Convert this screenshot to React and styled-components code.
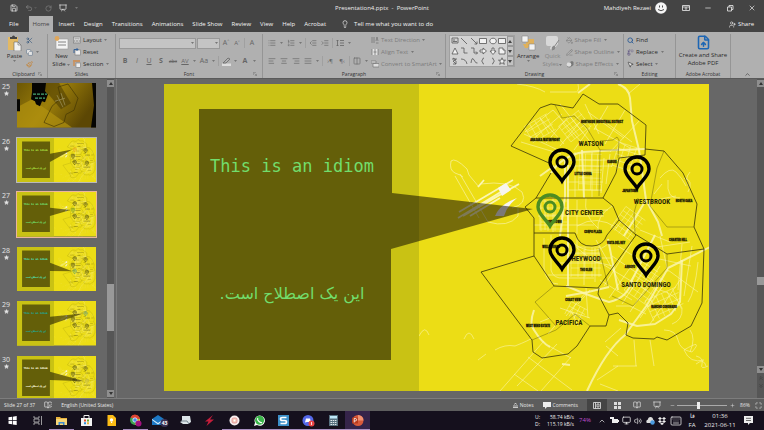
import React from "react";
import styled, { createGlobalStyle, css } from "styled-components";
import {
  Save, Undo2, RotateCw, Presentation, Scissors, Copy, Paintbrush, Lightbulb, Minus, X,
  Search, MousePointer2, UserPlus, FileUp, AlignLeft, AlignCenter, AlignRight, AlignJustify,
  List, ListOrdered, IndentDecrease, IndentIncrease, Columns2, ChevronUp, BookOpen,
  Volume2, Monitor, Keyboard, Star, Replace as ReplaceIcon, PencilLine, PaintBucket,
  Maximize, Plus, BookOpenCheck, ChevronsUp, ChevronsDown,
} from "lucide-react";

const Global = createGlobalStyle`
  *, *::before, *::after { box-sizing: border-box; }
  body { margin: 0; background: #666; }
  button, input, select { font: inherit; color: inherit; margin: 0; padding: 0; border: 0; background: none; }
  button { white-space: nowrap; }
  svg { display: block; flex: none; }
`;

const Shell = styled.div`
  height: 100vh;
  display: flex;
  flex-direction: column;
  overflow: hidden;
  font: 6px/8px "Open Sans", "Noto Sans", sans-serif;
  color: #333;
`;

/* ---------- title bar and tabs ---------- */

const TitleBar = styled.header`
  display: grid;
  grid-template-columns: 1fr auto 1fr;
  align-items: center;
  height: 16px;
  background: #444;
  color: #eee;
`;
const QuickAccess = styled.div`
  display: flex;
  align-items: center;
  gap: 7px;
  padding-left: 10px;
`;
const WindowTools = styled.div`
  display: flex;
  align-items: center;
  justify-content: flex-end;
  gap: 14px;
  padding-right: 8px;
`;
const Account = styled.div`
  display: flex;
  align-items: center;
  gap: 4px;
  margin-right: 1px;
`;
const BarButton = styled.button`
  display: flex;
  align-items: center;
  opacity: ${(p) => (p.$dim ? 0.4 : 1)};
`;

const TabBar = styled.nav`
  display: flex;
  height: 16px;
  padding: 0 10px 0 5px;
  gap: 1px;
  background: #444;
  color: #f4f4f4;
`;
const Tab = styled.button`
  padding: 0 4px;
  ${(p) => p.$file && css`padding-right: 9px;`}
  ${(p) => p.$active && css`background: #b0b0b0; color: #444;`}
`;
const TellMe = styled.button`
  display: flex;
  align-items: center;
  gap: 5px;
  margin-left: 10px;
`;
const Share = styled.button`
  display: flex;
  align-items: center;
  gap: 2px;
  margin-left: auto;
`;

/* ---------- ribbon ---------- */

const Ribbon = styled.section`
  display: grid;
  grid-template-columns: 48px 68px 147px 183px 178px 52px 55px 1fr;
  height: 47px;
  background: #b0b0b0;
  border-bottom: 1px solid #5a5a5a;
`;
const Group = styled.div`
  display: flex;
  flex-direction: column;
  min-width: 0;
  margin: 2px 0;
  border-right: 1px solid #959595;
`;
const GroupBody = styled.div`
  flex: 1;
  display: flex;
  padding: 0 3px;
  gap: ${(p) => p.$gap || 0}px;
`;
const GroupLabel = styled.div`
  display: grid;
  grid-template-columns: 9px 1fr 9px;
  align-items: center;
  height: 8px;
  text-align: center;
  font-size: 5px;
  color: #333;
`;
const BigButton = styled.button`
  display: flex;
  flex-direction: column;
  align-items: center;
  width: ${(p) => p.$w}px;
  padding-top: 1px;
  gap: 1px;
  line-height: 8px;
  color: ${(p) => (p.$dim ? "#858585" : "#2b2b2b")};
`;
const BigLabel = styled.span`
  display: flex;
  flex-direction: column;
  align-items: center;
`;
const Stack = styled.div`
  display: flex;
  flex-direction: column;
`;
const SmallButton = styled.button`
  display: flex;
  align-items: center;
  gap: 2px;
  height: 12px;
  color: ${(p) => (p.$dim ? "#7c7c7c" : "#2b2b2b")};
`;
const ToolRows = styled.div`
  display: flex;
  flex-direction: column;
  gap: 6px;
  padding-top: 3px;
  width: ${(p) => (p.$w ? p.$w + "px" : "auto")};
`;
const ToolRow = styled.div`
  display: flex;
  align-items: center;
  height: 12px;
  gap: ${(p) => p.$gap || 0}px;
`;
const Tool = styled.button`
  display: grid;
  place-items: center;
  width: ${(p) => p.$w || 12}px;
  height: 12px;
  color: #666;
  font-size: ${(p) => p.$size || 7}px;
  font-weight: ${(p) => (p.$bold ? 700 : 400)};
  font-style: ${(p) => (p.$italic ? "italic" : "normal")};
  text-decoration: ${(p) => p.$deco || "none"};
`;
const CaretBox = styled.span`
  display: inline-grid;
  place-items: center;
  width: ${(p) => p.$w}px;
  color: #777;
`;
const Divider = styled.span`
  width: 1px;
  height: 10px;
  margin: 0 1px;
  background: #a0a0a0;
`;
const Combo = styled.select`
  appearance: none;
  width: ${(p) => p.$w}px;
  height: 11px;
  border: 1px solid #999;
  background: #c4c4c4;
`;
const ComboWrap = styled.label`
  display: grid;
  align-items: center;
  & > * { grid-area: 1 / 1; }
  & > span { justify-self: end; pointer-events: none; }
`;
const Gallery = styled.div`
  display: grid;
  grid-template-columns: repeat(6, 1fr) 7px;
  grid-template-rows: repeat(3, 10px);
  width: 66px;
  height: 32px;
  margin-top: 1px;
  border: 1px solid #a0a0a0;
  background: #d2d2d2;
`;
const Shape = styled.button`
  display: grid;
  place-items: center;
  color: #555;
`;
const Scroller = styled.button`
  display: grid;
  place-items: center;
  border: 1px solid #999;
  background: #c2c2c2;
  color: #444;
`;
const Collapse = styled.button`
  align-self: end;
  justify-self: end;
  padding: 0 13px 2px 0;
`;

/* ---------- workspace ---------- */

const Workspace = styled.main`
  flex: 1;
  min-height: 0;
  display: flex;
  background: #676767;
`;
const ThumbPane = styled.aside`
  flex: 0 0 107px;
  display: flex;
  flex-direction: column;
  gap: 10px;
  padding: 4px 0 0 1px;
  overflow: hidden;
`;
const ThumbRow = styled.button`
  display: grid;
  grid-template-columns: 10px 79px;
  gap: 6px;
  flex: none;
  align-items: start;
  color: #e4e4e4;
  text-align: left;
`;
const ThumbNumber = styled.span`
  display: flex;
  flex-direction: column;
  align-items: center;
  font-size: 7px;
  line-height: 8px;
`;
const ThumbFrame = styled.span`
  display: block;
  aspect-ratio: 545 / 307;
  ${(p) => p.$ring && css`box-shadow: 0 0 0 1px ${p.$ring};`}
`;
const ScrollTrack = styled.div`
  flex: 0 0 7px;
  display: grid;
  grid-template-rows: 7px ${(p) => p.$before}fr ${(p) => p.$size}px ${(p) => p.$after}fr auto;
  padding: 1px 0;
  background: #565656;
`;
const ScrollButton = styled.button`
  display: grid;
  place-items: center;
  height: 7px;
  background: ${(p) => (p.$plain ? "none" : "#8e8e8e")};
  color: #333;
`;
const ScrollThumb = styled.div`
  grid-row: 3;
  background: #999;
`;
const ScrollEnd = styled.div`
  grid-row: 5;
  display: grid;
  gap: 1px;
`;
const Stage = styled.section`
  flex: 1;
  min-width: 0;
  margin-left: 2px;
  padding: 5px 48px 0 47px;
  border-left: 1px solid #7b7b7b;
`;
const SlideFrame = styled.div`
  aspect-ratio: 545 / 307;
`;
const SlideSvg = styled.svg`
  width: 100%;
  height: 100%;
`;

/* ---------- status bar ---------- */

const StatusBar = styled.footer`
  display: flex;
  align-items: center;
  height: 13px;
  padding: 0 1px 0 4px;
  border-top: 1px solid #7d7d7d;
  background: #5d5d5d;
  color: #e6e6e6;
  font-size: 5px;
`;
const StatusLeft = styled.div`
  display: flex;
  align-items: center;
  gap: 9px;
  margin-right: auto;
`;
const StatusButton = styled.button`
  display: flex;
  align-items: center;
  justify-content: center;
  gap: 2px;
  height: 12px;
  width: ${(p) => (p.$w ? p.$w + "px" : "auto")};
  margin-right: ${(p) => p.$mr || 0}px;
  background: ${(p) => (p.$active ? "#444" : "none")};
`;
const Zoom = styled.input`
  appearance: none;
  width: 50px;
  height: 8px;
  background: linear-gradient(#aaa, #aaa) center / 100% 1px no-repeat;
  &::-webkit-slider-thumb {
    appearance: none;
    width: 3px;
    height: 7px;
    background: #eee;
  }
`;

/* ---------- taskbar ---------- */

const Taskbar = styled.footer`
  display: flex;
  height: 19px;
  background: #15101d;
  color: #eee;
`;
const TaskList = styled.div`
  display: flex;
  flex: 0 0 370px;
`;
const TaskButton = styled.button`
  flex: 1;
  display: grid;
  place-items: center;
  background: ${(p) => (p.$active ? "#35244a" : "none")};
  box-shadow: ${(p) => (p.$open ? "inset 0 -1px 0 #a98fc0" : "none")};
`;
const Tray = styled.div`
  display: flex;
  align-items: center;
  margin-left: auto;
  padding-right: 8px;
`;
const TrayCell = styled.button`
  display: grid;
  place-items: center;
  width: ${(p) => p.$w || 12}px;
`;
const TrayText = styled.div`
  width: ${(p) => p.$w}px;
  text-align: ${(p) => p.$align || "center"};
  color: ${(p) => p.$color || "#eee"};
  font-size: 6px;
  line-height: 9px;
  white-space: nowrap;
`;
const Net = styled(TrayText)`
  font-size: 5px;
  line-height: 7px;
`;

/* ---------- small drawings ---------- */

const Down = ({ w = 7 }) => (
  <CaretBox $w={w}>
    <svg width="3" height="2" viewBox="0 0 3 2"><path d="M0 0h3L1.500 2z" fill="currentColor" /></svg>
  </CaretBox>
);
const Arrow = ({ up }) => (
  <svg width="4" height="3" viewBox="0 0 4 3"><path d={up ? "M0 3h4L2 0z" : "M0 0h4L2 3z"} fill="currentColor" /></svg>
);
const Launcher = () => (
  <svg width="4" height="4" viewBox="0 0 4 4" fill="none" stroke="#777" strokeWidth=".6"><path d="M.3 3V.3H3M1.500 1.500l2 2m0-1.600v1.700H1.800" /></svg>
);
const PasteIcon = () => (
  <svg width="15" height="16" viewBox="0 0 15 16">
    <rect x="1" y="2" width="10" height="13" fill="#e3b964" />
    <path d="M3 4V2h2a1.500 1.500 0 0 1 3 0h2v2z" fill="#444" />
    <path d="M7 7h4l3 3v6H7z" fill="#f2f2f2" stroke="#666" strokeWidth=".6" />
    <path d="M11 7v3h3" fill="none" stroke="#666" strokeWidth=".6" />
  </svg>
);
const NewSlideIcon = () => (
  <svg width="15" height="16" viewBox="0 0 15 16">
    <rect x="2" y="4" width="12" height="10" fill="#f4f4f4" stroke="#999" strokeWidth=".6" />
    <path d="M4 7h8M4 10h8" stroke="#777" strokeWidth=".9" />
    <circle cx="3" cy="3.500" r="2.400" fill="#e0a75b" />
  </svg>
);
const LayoutIcon = () => (
  <svg width="8" height="8" viewBox="0 0 8 8"><rect x=".5" y="1" width="7" height="6" fill="#ddd" stroke="#777" strokeWidth=".6" /><path d="M1.500 2.500h5M1.500 4h2v2h-2zM4.500 4h2v2h-2z" fill="none" stroke="#888" strokeWidth=".5" /></svg>
);
const ResetIcon = () => (
  <svg width="8" height="8" viewBox="0 0 8 8"><rect x="2" y="2" width="5.500" height="5" fill="#eee" stroke="#777" strokeWidth=".6" /><path d="M1 5V1.500h4M3.500 0L5 1.500 3.500 3" fill="none" stroke="#2c5c96" strokeWidth=".9" /></svg>
);
const SectionIcon = () => (
  <svg width="8" height="8" viewBox="0 0 8 8"><path d="M0 1h7" stroke="#d97f2c" strokeWidth="1.200" /><rect x="3" y="3" width="4.500" height="4.500" fill="#eee" stroke="#777" strokeWidth=".6" /><path d="M1 2v4" stroke="#d97f2c" /></svg>
);
const ArrangeIcon = () => (
  <svg width="15" height="16" viewBox="0 0 15 16">
    <path d="M5 4h8v8H5z" fill="#e0b15c" /><path d="M1 1h6v6H1zM8 9h6v6H8z" fill="#f2f2f2" stroke="#888" strokeWidth=".6" />
    <path d="M2 9h5v4H4z" fill="#e0b15c" />
  </svg>
);
const StylesIcon = () => (
  <svg width="15" height="16" viewBox="0 0 15 16"><path d="M1 3q0-2 2-2h8q2 0 2 2v6l-5 6q-3 0-3-2l1-2H3q-2 0-2-2z" fill="#d8d8d8" /><path d="M14 5l-5 7M9 11q-2 0-2 4 3 0 3-3z" fill="#888" stroke="#888" /></svg>
);
const TextDirIcon = () => (
  <svg width="8" height="8" viewBox="0 0 8 8" fill="none" stroke="#777" strokeWidth=".8"><path d="M1 1v6M3 1v6M5 5l1-4 1 4M5 7h2.500" /></svg>
);
const AlignTextIcon = () => (
  <svg width="8" height="8" viewBox="0 0 8 8"><rect x="1" y="1" width="6" height="6" fill="#e2e2e2" /><path d="M1 1v6M7 1v6M4 1v6M2.500 4h3" stroke="#777" strokeWidth=".8" /></svg>
);
const SmartArtIcon = () => (
  <svg width="8" height="8" viewBox="0 0 8 8"><path d="M0 1h5v2H0zM2 3.500h6V7H2z" fill="#ddd" stroke="#777" strokeWidth=".7" /></svg>
);
const EffectsIcon = () => (
  <svg width="8" height="8" viewBox="0 0 8 8"><path d="M2 3l4-2 1.500 1v3L4 7.500 1 7z" fill="#777" /><circle cx="3" cy="4.500" r="2.300" fill="#ddd" /></svg>
);
const Avatar = () => (
  <svg width="12" height="12" viewBox="0 0 12 12"><circle cx="6" cy="6" r="5.800" fill="#f5f5f5" /><path d="M4.500 3.500v2M7.500 3.500v2M3 7.500q3 2.500 6 0" stroke="#222" fill="none" strokeWidth=".8" /></svg>
);

const line = { fill: "none", stroke: "currentColor", strokeWidth: 0.8 };
const shapePaths = [
  "M1 1h6v5H1zM2 3h2M2 4.500h4", "M1 1l6 6", "M1 1l6 6M7 4.500V7H4.500", "M.5 1.500h7v5h-7z", "M4 1.200a3.300 2.800 0 1 0 .1 0z", "M.5 1.500h7v5h-7z",
  "M4 1l3 6H1z", "M1 1h3v5h3.500", "M1 1h3v5h3.500M6 4.500L7.500 6 6 7.500", "M1 3h3V1l3.500 3L4 7V5H1z", "M3 1h2v3h2L4 7.500 1 4h2z", "M1 1h4v2h2v4H1z",
  "M2 1l3 2-3 1 3 3M5 4v3H2M1 2h5", "M1 2q5 0 6 5", "M1 6q1-7 3-3t3.500 3", "M5 1Q3.500 1 3.500 3L2.500 4l1 1q0 2 1.500 2", "M3 1q1.500 0 1.500 2l1 1-1 1q0 2-1.500 2", "M4 .8l1 2.400h2.500l-2 1.600.8 2.500L4 5.800 1.700 7.300l.8-2.500-2-1.600H3z",
];

/* ---------- city map ---------- */

const districts = [
  "M549 163L511 146 540 108 551 104 573 108 583 94 599 104 618 104 646 125 645 155 619 158 616 173 603 198 536 198 551 173",
  "M536 198L525 207 534 218V256L554 286 598 288 636 235 619 220 613 206 603 198",
  "M534 233h41M575 233q4 14 17 13 11 0 15-11L619 220",
  "M645 149L664 151 683 173 697 204 694 227 699 238 704 249 702 303 691 326 667 340 657 337 654 339 633 338 626 335 628 323 618 313 609 315 598 294 599 288",
  "M704 249L667 254 635 234M534 256L481 272 532 340 533 352 542 358 568 354 577 346 590 326 606 326 609 315",
];
const subDistricts = [
  "M555 105L562 118 574 116 587 128 600 150 599 196M600 141l13-1 4-3 2 3-1 18M664 151L657 168 650 206 667 227H694",
  "M554 286L535 302 556 326M532 340l24-10 19-16 15 12M667 254v14L633 306 612 296M600 150h19M599 248l9 38M638 198l-4 15 1 20",
];
const highways = [
  "M578 93L590 84M618 84Q629 88 630 98L632 121 639 150 643 178 646 200 658 222 662 236M646 200L624 236",
  "M551 173Q562 156 583 152L619 150 645 149M565 158V196L560 236M587 391Q606 350 625 335L647 305 668 268 710 247",
  "M566 286Q590 296 609 302 628 298 632 280L655 235M608 239L618 290M540 176l14-10M568 165V286M582 150l2 48",
  "M534 310q-5 14 0 20 8 13 16 17M562 364l8 1M619 320l18 6 18-2 16-10 9-12 2-42M566 296L588 292 609 287",
];
const roads = [
  "M551 235V270q2 9 13 8h30M544 238v30q2 16 14 16M577 238v10l18 14 18 4M595 248v34M584 250v35M572 258h40M555 253h45M557 263h45M573 243q20 15 36 0M548 275h54",
  "M540 200v30M545 200v30M553 198v34M577 200v34M568 210h40M534 225h60M538 216h66M586 198q-3 18 12 30M612 206q-16 10-14 25M577 226q20-12 40 2",
  "M570 160h44M568 166h44M567 182h36M568 190h34M575 152v45M592 152v45M604 158l-3 35M610 154l-4 30M578 170h24",
  "M517 84q18 2 28 8M550 92h24q6 1 4-8M640 84l-12 10M600 118l32 24M594 128l36 20M585 104l14 30M608 106l-14 24M625 110l-20 34M588 112l36 26M640 120l-30 32",
  "M640 230l30 12M650 248l40-6M655 258l36 8M660 236l8 36M682 244l-4 46M692 246l-8 50M698 262q-3 30-10 40M668 270l30 22M660 290q16 4 22 18 1 12-10 16",
  "M604 265l44 26M612 256l44 30M600 280l32 20M618 246l40 26M609 298l28-40M604 286l28-44M622 304l28-44M630 312l30-46M616 306h14l16 8M640 318l24-34M650 324l30-44",
  "M572 312l6 14M560 308l30 10M566 316l20-24M588 318l-2-30M596 240l26 46M540 322l10-4M560 320l-12 14M578 304l12-14",
  "M660 178q10-12 16-6t10 14M662 184l-8 10M668 180q-2 20 12 18M684 178q10 2 4 14M656 200l20-4M690 172q-7 8 0 16",
  "M664 330q12 0 14 10t14 12q12-14-8-2 6 14 20 10M690 352q6-14 0-22M696 356q8 2 6 8t6 2M696 364q8-6 10 2",
  "M500 391l44-50M517 386l40-42M541 391l30-34M528 357l44 33M514 374l24 17M549 346l22 12M597 380l21-14M600 384l18 7M634 340l2 26M650 340l4 26M613 366h24M618 356l-12-10M605 342l16-14",
  "M419 336q6-12 10-1M464 339q5-12 10 0M495 350q10-6 20-4 15-6 17-8M478 360l8-6",
  "M521 142l40 12M525 132l28-22M532 140l30-26M546 143l22-26M560 146l20-24M540 118l24 26M524 134l34 16M553 110l30 34M560 104l32 40M574 150l16-22",
];
const streetGrids = [
  { x: 575, y: 126, w: 26, h: 20, a: -38, s: 5 },
  { x: 628, y: 224, w: 24, h: 26, a: 36, s: 5 },
  { x: 645, y: 286, w: 30, h: 30, a: 34, s: 6 },
  { x: 586, y: 262, w: 30, h: 30, a: 0, s: 7 },
  { x: 590, y: 172, w: 22, h: 36, a: 2, s: 6 },
  { x: 665, y: 304, w: 34, h: 22, a: -24, s: 6 },
  { x: 626, y: 158, w: 22, h: 26, a: 18, s: 6 },
  { x: 554, y: 216, w: 26, h: 30, a: 0, s: 7 },
  { x: 540, y: 128, w: 26, h: 18, a: -30, s: 6 },
  { x: 576, y: 312, w: 18, h: 14, a: 28, s: 5 },
];
const gridPath = ({ w, h, s }) => {
  let d = "";
  for (let i = -w / 2; i <= w / 2; i += s) d += `M${i} ${-h / 2}v${h}`;
  for (let j = -h / 2; j <= h / 2; j += s) d += `M${-w / 2} ${j}h${w}`;
  return d;
};

const bigLabels = [
  ["WATSON", 591, 146], ["WESTBROOK", 652, 204], ["CITY CENTER", 584, 215], ["HEYWOOD", 586, 261],
  ["SANTO DOMINGO", 646, 287], ["PACIFICA", 569, 325],
];
const smallLabels = [
  ["NORTHSIDE INDUSTRIAL DISTRICT", 602, 123], ["ARASAKA WATERFRONT", 545, 141], ["LITTLE CHINA", 583, 175],
  ["KABUKI", 612, 163], ["JAPANTOWN", 630, 192], ["NORTH OAKA", 684, 202], ["DOWNTOWN", 554, 223],
  ["CORPO PLAZA", 593, 233], ["WELLSPRINGS", 551, 248], ["VISTA DEL REY", 616, 244], ["CHARTER HILL", 678, 241],
  ["THE GLEN", 586, 271], ["ARROYO", 630, 268], ["RANCHO CORONADO", 664, 308], ["COAST VIEW", 573, 301],
  ["WEST WIND ESTATE", 538, 327],
];
const MapText = styled.text`
  font-family: "Roboto Condensed", "Liberation Sans Narrow", "Liberation Sans", sans-serif;
  font-weight: 700;
  font-size: ${(p) => (p.$big ? 7 : 3)}px;
  text-anchor: middle;
  fill: #2a2705;
  stroke: #2a2705;
  stroke-width: ${(p) => (p.$big ? 0 : 0.3)};
`;
const IdiomText = styled.text`
  font-family: ${(p) => (p.$fa ? '"DejaVu Sans"' : '"DejaVu Sans Mono"')}, monospace;
  font-size: ${(p) => (p.$fa ? 16 : 17)}px;
  text-anchor: middle;
  stroke: currentColor;
  stroke-width: ${(p) => (p.$mini ? 1 : 0)};
`;

const pins = [[562, 162], [637, 169], [550, 207], [562, 250], [646, 256]];

const Pin = ({ x, y, color }) => (
  <g transform={`translate(${x} ${y})`} fill="none" stroke={color}>
    <path d="M0 19C-4 12-12 7-12 0a12 12 0 0 1 24 0C12 7 4 12 0 19z" strokeWidth="3.400" />
    <circle r="5" strokeWidth="3" />
  </g>
);

function MapSlide({ target = 2, pinColor = "#4c8c22", ink = "#72dd6c", label, mini }) {
  const [tx, ty] = pins[target];
  const tip = `${tx - 17} ${ty + 2}`;
  return (
    <SlideSvg viewBox="164 84 545 307" role="img" aria-label={label}>
      <rect x="164" y="84" width="546" height="307" fill="#ecdd15" />
      <g fill="none" stroke="#fbf6b4" strokeLinejoin="round">
        {streetGrids.map((g, i) => (
          <path key={i} d={gridPath(g)} transform={`translate(${g.x} ${g.y}) rotate(${g.a})`} strokeWidth=".7" opacity=".6" />
        ))}
        {roads.map((d) => <path key={d} d={d} strokeWidth=".8" opacity=".7" />)}
        {highways.map((d) => <path key={d} d={d} strokeWidth="2" opacity=".8" />)}
        <path d="M479 187l-10-12-2-6q-12-12-16-8-2 9 4 12 6 2 8 4M455 176l24 42M460 174l28 48M480 184q30-4 42 8 6 12-10 16M488 222q20 6 30-6V208" strokeWidth=".9" opacity=".7" />
        <path d="M459 212l54-32M463 216l56-32M458 218l46-28M470 216l30-18M478 187l6-7" strokeWidth="1.800" />
      </g>
      <path d="M498 188l8-5 5 7-9 6zM495 216q5-12 22-18-10 8-13 18z" fill="#f7f5f0" />
      <g fill="none" stroke="#37340a" strokeLinejoin="round">
        {subDistricts.map((d) => <path key={d} d={d} strokeWidth=".6" opacity=".6" />)}
        {districts.map((d) => <path key={d} d={d} strokeWidth=".8" />)}
      </g>
      {mini
        ? smallLabels.map(([t, x, y]) => <path key={t} d={`M${x - t.length * 0.8} ${y - 1}h${t.length * 1.6}`} stroke="#2a2705" strokeWidth="2" opacity=".7" />)
        : smallLabels.map(([t, x, y]) => <MapText key={t} x={x} y={y}>{t}</MapText>)}
      {mini
        ? bigLabels.map(([t, x, y]) => <path key={t} d={`M${x - t.length * 1.700} ${y - 2}h${t.length * 3.400}`} stroke="#2a2705" strokeWidth="3" opacity=".8" />)
        : bigLabels.map(([t, x, y]) => <MapText key={t} $big x={x} y={y}>{t}</MapText>)}
      <rect x="164" y="84" width="255" height="307" fill="#c9c214" />
      <path d={`M199 109H392V193L${tip} 391 249V360H199z`} fill="#040000" opacity=".51" />
      {pins.map(([x, y], i) => <Pin key={i} x={x} y={y} color={i === target ? pinColor : mini ? "#2a2a10" : "#000"} />)}
      <IdiomText $mini={mini} x="292" y="172" fill={ink} color={ink}>This is an idiom</IdiomText>
      <IdiomText $fa $mini={mini} x="292" y="299" fill={ink} color={ink} direction="rtl">این یک اصطلاح است.</IdiomText>
    </SlideSvg>
  );
}

const CoverSlide = () => (
  <SlideSvg viewBox="0 0 79 44" preserveAspectRatio="none" role="img" aria-label="Slide 25">
    <defs><linearGradient id="gold" x2="1" y2=".4"><stop offset="0" stopColor="#6b5605" /><stop offset=".5" stopColor="#9c7f0a" /><stop offset="1" stopColor="#5c4704" /></linearGradient></defs>
    <rect width="79" height="44" fill="url(#gold)" />
    <path d="M0 24l15-8 40 28H0z" fill="#b2930f" opacity=".7" /><path d="M22 0h20l12 20-10 6z" fill="#4f3e03" opacity=".6" />
    <path d="M15 0h14l-1 8 3 3-3 8-3-1-2 5-4-2-1-3-4-2 1-7zM75 0h4v44h-5l3-22zM0 16h3v12H0z" fill="#050503" />
    <path d="M41 4l10-3 10 14-4 12-8 4-2 8-10 4-10-4 8-16 9-8z" fill="none" stroke="#3c3004" strokeWidth=".6" />
    <path d="M40 12l6 12M44 10l4 12M38 18l10-3" stroke="#b4ae80" strokeWidth=".5" />
    <path d="M16 11h14M18 15h10" stroke="#48a875" strokeWidth="1.200" strokeDasharray="3 1" />
  </SlideSvg>
);

const thumbs = [
  { n: 25 },
  { n: 26, target: 0, pinColor: "#e08a1c", ink: "#a6dc3e", ring: "#b9b9b9" },
  { n: 27, target: 2, ring: "#eab59b" },
  { n: 28, target: 3, pinColor: "#2f8c84", ink: "#52dcae" },
  { n: 29, target: 1, pinColor: "#2a7d8e", ink: "#22a795" },
  { n: 30, target: 4, pinColor: "#aaa35a", ink: "#f2f0d8" },
];

/* ---------- taskbar drawings ---------- */

const Glyph = ({ children }) => <svg width="13" height="13" viewBox="0 0 13 13">{children}</svg>;
const tasks = [
  ["Start", <Glyph><path d="M2.500 3.300l3.500-.5v3.400H2.500zM6.700 2.700l4-.6v4.100h-4zM2.500 6.900H6v3.400l-3.500-.5zM6.700 6.900h4V11l-4-.6z" fill="#fff" /></Glyph>],
  ["Task view", <Glyph><path d="M3 2v2h5V2M3 11V9h5v2M3 5h5v3H3zM10.500 2v9" fill="none" stroke="#bbb" strokeWidth=".8" /></Glyph>],
  ["File Explorer", <Glyph><path d="M1 3h4l1 1h6v7H1z" fill="#e9b33b" /><path d="M1 5h11v6H1z" fill="#f7d678" /><path d="M3.500 11V8h6v3H8V9.500H5V11z" fill="#3f8bd0" /></Glyph>, true],
  ["Store", <Glyph><path d="M1 4h11v8H1z" fill="#f3f3f3" /><path d="M4 4V1.500h5V4" fill="none" stroke="#eee" /><path d="M4 5.500h2v2H4z" fill="#e04b2a" /><path d="M7 5.500h2v2H7z" fill="#6caa2c" /><path d="M4 8.300h2v2H4z" fill="#2f8fd6" /><path d="M7 8.300h2v2H7z" fill="#e9b33b" /></Glyph>],
  ["Keep", <Glyph><path d="M2.500 1H8l3 3v8H2.500z" fill="#fbbc16" /><circle cx="6.500" cy="6" r="1.700" fill="#fff" /><path d="M6 8.500h1.200" stroke="#fff" /></Glyph>],
  ["Chrome", <Glyph><circle cx="6" cy="6" r="5" fill="#3da351" /><path d="M1.500 3.500A5 5 0 0 1 11 5H6z" fill="#df4433" /><path d="M11 5a5 5 0 0 1-5 6l2-5z" fill="#f7c934" /><circle cx="6" cy="6" r="2.200" fill="#4a87ec" stroke="#fff" strokeWidth=".7" /><circle cx="9.500" cy="9.500" r="3" fill="#a1107f" /></Glyph>, true],
  ["Mail", <svg width="18" height="13" viewBox="0 0 18 13"><path d="M1 5l6-4 6 4v6H1z" fill="#1d78c4" /><path d="M1 5l6 4 6-4v1l-6 4.500L1 6z" fill="#d8ecfa" /><circle cx="13.500" cy="9" r="4" fill="#3a3152" /><text x="13.500" y="10.800" fontSize="5" fontWeight="700" textAnchor="middle" fill="#fff">43</text></svg>],
  ["Sticky", <Glyph><path d="M3 2h8l1 6-3 2H4L1 8l2-1z" fill="#dce4e8" /><path d="M2 7h6l2 3" fill="none" stroke="#76858f" /></Glyph>],
  ["Flash", <Glyph><path d="M10 1L2 7.500h3.500L3.500 12l7.500-6.500H7z" fill="#c41d3a" /></Glyph>],
  ["Instagram", <Glyph><circle cx="6.500" cy="6.500" r="5" fill="#f6efee" /><rect x="4" y="4" width="5" height="5" rx="1.500" fill="#f3c9b8" stroke="#e08a90" strokeWidth=".8" /><circle cx="6.500" cy="6.500" r="1" fill="#fff" /></Glyph>, true],
  ["WhatsApp", <Glyph><path d="M1 12l1-3.300A5.200 5.200 0 1 1 4 11z" fill="#fff" /><circle cx="6.600" cy="6.300" r="4.500" fill="#3bb54a" /><path d="M4.700 4q-.7 2 1.300 3.500T9 8.500" fill="none" stroke="#fff" strokeWidth="1.200" /></Glyph>, true],
  ["Snagit", <Glyph><rect x="1" y="1" width="11" height="11" fill="#3b8fc9" /><path d="M9.500 3.500h-4q-2 0-2 1.500t2 1.500h2q2 0 2 1.500t-2 1.500h-4" fill="none" stroke="#fff" strokeWidth="1.600" /></Glyph>, true],
  ["Discord", <Glyph><circle cx="6" cy="6.500" r="5.500" fill="#5468e8" /><path d="M3 8.500l1-4h4l1 4-2-.5H5z" fill="#fff" /><circle cx="9.500" cy="9.500" r="3" fill="#e84545" /><path d="M9.500 8v3" stroke="#fff" strokeWidth=".8" /></Glyph>, true],
  ["Calculator", <Glyph><rect x="2" y="1" width="9" height="11" fill="#56707e" /><path d="M3 2h7v2.500H3z" fill="#bfe8f8" /><path d="M3.500 6.500h6M3.500 8.500h6M3.500 10.500h6" stroke="#dfe7eb" strokeDasharray="1.500 .7" /></Glyph>, true],
  ["PowerPoint", <Glyph><circle cx="7" cy="6.500" r="5.500" fill="#d9593a" /><path d="M7 1a5.500 5.500 0 0 1 5.500 5.500H7z" fill="#f29272" /><rect x="1" y="3.500" width="6" height="6" rx=".6" fill="#b93a1d" /><path d="M3.200 8.500v-4h1q1.400 0 1.400 1.200T4.200 7h-1" fill="none" stroke="#fff" strokeWidth=".8" /></Glyph>, true],
];

const ribbonGroup = (label, body, launcher, gap) => (
  <Group>
    <GroupBody $gap={gap}>{body}</GroupBody>
    <GroupLabel><span /><span>{label}</span>{launcher && <Launcher />}</GroupLabel>
  </Group>
);
const IC = { size: 8, strokeWidth: 2 };

export default function App() {
  return (
    <Shell>
      <Global />
      <TitleBar>
        <QuickAccess>
          <BarButton aria-label="Save"><Save {...IC} /></BarButton>
          <BarButton aria-label="Undo" $dim><Undo2 {...IC} /><Down w={5} /></BarButton>
          <BarButton aria-label="Redo" $dim><RotateCw {...IC} size={7} /></BarButton>
          <BarButton aria-label="From beginning"><Presentation {...IC} /></BarButton>
          <BarButton aria-label="Customize"><Down w={4} /></BarButton>
        </QuickAccess>
        <span>Presentation4.pptx &nbsp;-&nbsp; PowerPoint</span>
        <WindowTools>
          <Account><span>Mahdiyeh Rezaei</span><Avatar /></Account>
          <BarButton aria-label="Ribbon display"><svg width="8" height="8" viewBox="0 0 8 8" {...line}><path d="M.5 1.500h7v5h-7zM.5 3h7M4 6V3.500M3 4.600l1-1 1 1" /></svg></BarButton>
          <BarButton aria-label="Minimize"><Minus {...IC} /></BarButton>
          <BarButton aria-label="Restore"><svg width="8" height="8" viewBox="0 0 8 8" {...line}><path d="M1.500 3h4v4h-4zM3 3V1.500h4v4H5.500" /></svg></BarButton>
          <BarButton aria-label="Close"><X {...IC} /></BarButton>
        </WindowTools>
      </TitleBar>

      <TabBar>
        {["File", "Home", "Insert", "Design", "Transitions", "Animations", "Slide Show", "Review", "View", "Help", "Acrobat"].map((t) => (
          <Tab key={t} $file={t === "File"} $active={t === "Home"}>{t}</Tab>
        ))}
        <TellMe><Lightbulb {...IC} />Tell me what you want to do</TellMe>
        <Share><UserPlus {...IC} size={7} />Share</Share>
      </TabBar>

      <Ribbon>
        {ribbonGroup("Clipboard", <>
          <BigButton $w={23}><PasteIcon /><BigLabel>Paste<Down /></BigLabel></BigButton>
          <Stack>
            <SmallButton aria-label="Cut"><Scissors size={7} color="#33567c" /></SmallButton>
            <SmallButton aria-label="Copy"><Copy size={7} color="#5a6f87" fill="#e4e4e4" /><Down w={5} /></SmallButton>
            <SmallButton aria-label="Format painter"><Paintbrush size={7} color="#c97f28" /></SmallButton>
          </Stack>
        </>, true)}
        {ribbonGroup("Slides", <>
          <BigButton $w={21}><NewSlideIcon /><BigLabel><span>New</span><span>Slide<Down w={5} /></span></BigLabel></BigButton>
          <Stack>
            <SmallButton><LayoutIcon />Layout<Down w={4} /></SmallButton>
            <SmallButton><ResetIcon />Reset</SmallButton>
            <SmallButton><SectionIcon />Section<Down w={4} /></SmallButton>
          </Stack>
        </>, false, 1)}
        {ribbonGroup("Font", (
          <ToolRows>
            <ToolRow $gap={1}>
              <ComboWrap><Combo $w={77} aria-label="Font" /><Down /></ComboWrap>
              <ComboWrap><Combo $w={23} aria-label="Font size" /><Down /></ComboWrap>
              <Tool $w={10}>A˄</Tool><Tool $w={10} $size={6}>A˅</Tool><Divider /><Tool $w={10}>A</Tool>
            </ToolRow>
            <ToolRow>
              <Tool $bold>B</Tool><Tool $italic>I</Tool><Tool $deco="underline">U</Tool><Tool $bold>S</Tool>
              <Tool $size={5} $deco="line-through">abc</Tool><Tool $size={6} $deco="underline">AV</Tool><Down /><Tool>Aa</Tool><Down />
              <Divider />
              <Tool aria-label="Highlight"><svg width="9" height="9" viewBox="0 0 9 9"><path d="M0 6.500h9V9H0z" fill="#ddd" /><path d="M1 6l5-5 2 1-4 4z" {...line} /></svg></Tool>
              <Down /><Tool $bold>A</Tool><Down />
            </ToolRow>
          </ToolRows>
        ), true)}
        {ribbonGroup("Paragraph", <>
          <ToolRows $w={105}>
            <ToolRow>
              <Tool aria-label="Bullets"><List {...IC} /></Tool><Down /><Tool aria-label="Numbering"><ListOrdered {...IC} /></Tool><Down /><Divider />
              <Tool aria-label="Outdent"><IndentDecrease {...IC} /></Tool><Tool aria-label="Indent"><IndentIncrease {...IC} /></Tool><Divider />
              <Tool aria-label="Line spacing"><svg width="8" height="8" viewBox="0 0 8 8" {...line}><path d="M1.500 1v6M.5 2l1-1 1 1M.5 6l1 1 1-1M4 1.500h4M4 4h4M4 6.500h4" /></svg></Tool><Down />
            </ToolRow>
            <ToolRow>
              <Tool aria-label="Left"><AlignLeft {...IC} /></Tool><Tool aria-label="Center"><AlignCenter {...IC} /></Tool><Tool aria-label="Right"><AlignRight {...IC} /></Tool>
              <Tool aria-label="Justify"><AlignJustify {...IC} /></Tool><Down /><Divider />
              <Tool $size={6}>›¶</Tool><Tool $size={6}>¶‹</Tool><Divider /><Tool aria-label="Columns"><Columns2 {...IC} /></Tool><Down />
            </ToolRow>
          </ToolRows>
          <Stack>
            <SmallButton $dim><TextDirIcon />Text Direction<Down w={4} /></SmallButton>
            <SmallButton $dim><AlignTextIcon />Align Text<Down w={4} /></SmallButton>
            <SmallButton $dim><SmartArtIcon />Convert to SmartArt<Down w={3} /></SmallButton>
          </Stack>
        </>, true)}
        {ribbonGroup("Drawing", <>
          <Gallery>
            {[0, 1, 2].map((r) => (
              <React.Fragment key={r}>
                {shapePaths.slice(r * 6, r * 6 + 6).map((d, i) => (
                  <Shape key={i} aria-label={`Shape ${r * 6 + i + 1}`}><svg width="8" height="8" viewBox="0 0 8 8" {...line}><path d={d} fill={d.endsWith("z") ? "#f2f2f2" : "none"} /></svg></Shape>
                ))}
                <Scroller aria-label="Scroll shapes"><Arrow up={r === 0} /></Scroller>
              </React.Fragment>
            ))}
          </Gallery>
          <BigButton $w={23}><ArrangeIcon /><BigLabel>Arrange<Down /></BigLabel></BigButton>
          <BigButton $w={22} $dim><StylesIcon /><BigLabel><span>Quick</span><span>Styles<Down w={4} /></span></BigLabel></BigButton>
          <Stack>
            <SmallButton $dim><PaintBucket size={7} />Shape Fill<Down w={4} /></SmallButton>
            <SmallButton $dim><PencilLine size={7} />Shape Outline<Down w={4} /></SmallButton>
            <SmallButton $dim><EffectsIcon />Shape Effects<Down w={4} /></SmallButton>
          </Stack>
        </>, true, 2)}
        {ribbonGroup("Editing", (
          <Stack>
            <SmallButton><Search size={7} color="#2c5c96" strokeWidth={3} />Find</SmallButton>
            <SmallButton><ReplaceIcon size={7} color="#55497c" />Replace<Down w={6} /></SmallButton>
            <SmallButton><MousePointer2 size={7} fill="#eee" />Select<Down w={4} /></SmallButton>
          </Stack>
        ), false, 0)}
        {ribbonGroup("Adobe Acrobat", (
          <BigButton $w={48}><FileUp size={15} color="#1d66b4" strokeWidth={2.5} /><BigLabel><span>Create and Share</span><span>Adobe PDF</span></BigLabel></BigButton>
        ), false)}
        <Collapse aria-label="Collapse ribbon"><ChevronUp size={7} /></Collapse>
      </Ribbon>

      <Workspace>
        <ThumbPane>
          {thumbs.map(({ n, ring, ...rest }) => (
            <ThumbRow key={n}>
              <ThumbNumber>{n}<Star size={5} fill="#e4e4e4" /></ThumbNumber>
              <ThumbFrame $ring={ring}>{n === 25 ? <CoverSlide /> : <MapSlide mini {...rest} label={`Slide ${n}`} />}</ThumbFrame>
            </ThumbRow>
          ))}
        </ThumbPane>
        <ScrollTrack $before={199} $size={47} $after={59}>
          <ScrollButton aria-label="Scroll up"><Arrow up /></ScrollButton>
          <ScrollThumb />
          <ScrollEnd><ScrollButton aria-label="Scroll down"><Arrow /></ScrollButton></ScrollEnd>
        </ScrollTrack>
        <Stage>
          <SlideFrame><MapSlide label="Current slide" /></SlideFrame>
        </Stage>
        <ScrollTrack $before={194} $size={8} $after={82}>
          <ScrollButton aria-label="Scroll up"><Arrow up /></ScrollButton>
          <ScrollThumb />
          <ScrollEnd>
            <ScrollButton aria-label="Scroll down"><Arrow /></ScrollButton>
            <ScrollButton $plain aria-label="Previous slide"><ChevronsUp size={6} /></ScrollButton>
            <ScrollButton $plain aria-label="Next slide"><ChevronsDown size={6} /></ScrollButton>
            <ScrollButton as="span" $plain />
          </ScrollEnd>
        </ScrollTrack>
      </Workspace>

      <StatusBar>
        <StatusLeft><span>Slide 27 of 37</span><BookOpenCheck size={8} /><span>English (United States)</span></StatusLeft>
        <StatusButton $mr={9}><svg width="5" height="6" viewBox="0 0 5 6" {...line}><path d="M0 5.500h5M0 4h5M1.500 2.500l1-1.500 1 1.500" /></svg>Notes</StatusButton>
        <StatusButton $mr={9}><svg width="8" height="7" viewBox="0 0 8 7"><path d="M0 0h8v5H4L2 7V5H0z" fill="#eee" /></svg>Comments</StatusButton>
        <StatusButton $w={20} $active aria-label="Normal"><svg width="8" height="7" viewBox="0 0 8 7" {...line}><path d="M.5.500h7v6h-7zM2.500.500v6M4 2h2v3H4z" /></svg></StatusButton>
        <StatusButton $w={20} aria-label="Slide sorter"><svg width="7" height="7" viewBox="0 0 7 7"><path d="M0 0h3v3H0zM4 0h3v3H4zM0 4h3v3H0zM4 4h3v3H4z" fill="#ddd" /></svg></StatusButton>
        <StatusButton $w={20} aria-label="Reading view"><BookOpen size={8} /></StatusButton>
        <StatusButton $w={20} aria-label="Slide show"><Presentation size={8} /></StatusButton>
        <StatusButton $w={10} aria-label="Zoom out"><Minus size={5} /></StatusButton>
        <Zoom type="range" min="0" max="100" defaultValue="43" aria-label="Zoom" />
        <StatusButton $w={10} aria-label="Zoom in"><Plus size={5} /></StatusButton>
        <StatusButton $w={16}>86%</StatusButton>
        <StatusButton $w={10} aria-label="Fit"><Maximize size={7} /></StatusButton>
      </StatusBar>

      <Taskbar>
        <TaskList>
          {tasks.map(([name, icon, open]) => (
            <TaskButton key={name} aria-label={name} $open={open} $active={name === "PowerPoint"}>{icon}</TaskButton>
          ))}
        </TaskList>
        <Tray>
          <Net $w={8} $align="left">U:<br />D:</Net>
          <Net $w={31} $align="right">58.74 kB/s<br />115.19 kB/s</Net>
          <TrayText $w={22} $color="#c04fd0">74%</TrayText>
          <TrayCell aria-label="Hidden icons"><ChevronUp size={8} /></TrayCell>
          <TrayCell aria-label="Battery"><svg width="9" height="7" viewBox="0 0 9 7"><path d="M2 2h6v4H2zM8 3h1v2H8zM0 0h4v2H0z" fill="#eee" /></svg></TrayCell>
          <TrayCell aria-label="Network"><Monitor size={9} /></TrayCell>
          <TrayCell aria-label="Volume"><Volume2 size={8} /></TrayCell>
          <TrayCell aria-label="Cloud"><svg width="9" height="8" viewBox="0 0 9 8"><path d="M1 6a2 2 0 0 1 1-3.500 2.500 2.500 0 0 1 5 0Q9 3 8 6z" fill="#ddd" /><circle cx="6.500" cy="5.500" r="2.200" fill="#4b9be0" /></svg></TrayCell>
          <TrayCell aria-label="Dropbox"><svg width="8" height="8" viewBox="0 0 8 8"><path d="M2 0l2 1.500L2 3 0 1.500zM6 0l2 1.500L6 3 4 1.500zM2 3l2 1.500L2 6 0 4.500zM6 3l2 1.500L6 6 4 4.500zM4 5.500l2 1.200L4 8 2 6.700z" fill="#eee" /></svg></TrayCell>
          <TrayCell $w={16} aria-label="Keyboard"><Keyboard size={12} strokeWidth={1.5} /></TrayCell>
          <TrayText $w={16}>فا<br />FA</TrayText>
          <TrayText $w={40}>01:36<br />2021-06-11</TrayText>
          <TrayCell $w={16} aria-label="Notifications"><svg width="9" height="9" viewBox="0 0 9 9"><path d="M0 0h9v7H6L4 9V7H0z" fill="#eee" /><path d="M2 2.300h5M2 4.500h5" stroke="#333" strokeWidth=".7" /></svg></TrayCell>
        </Tray>
      </Taskbar>
    </Shell>
  );
}
